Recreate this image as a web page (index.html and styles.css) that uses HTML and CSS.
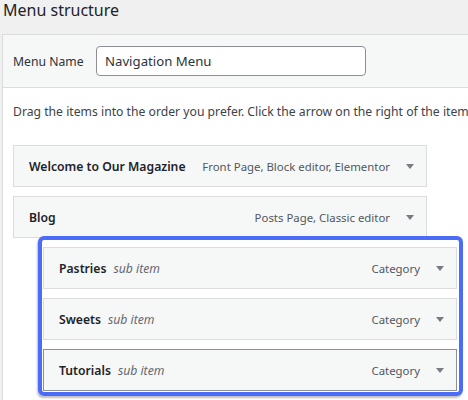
FILE: index.html
```html
<!DOCTYPE html>
<html lang="en">
<head>
<meta charset="utf-8">
<title>Menu structure</title>
<link rel="stylesheet" href="styles.css">
</head>
<body>
<h2 class="title">Menu structure</h2>
<div class="panel">
  <div class="panel-header">
    <label class="name-label" for="menu-name">Menu Name</label>
    <input class="name-input" id="menu-name" type="text" value="Navigation Menu">
  </div>
  <div class="panel-body">
    <p class="hint">Drag the items into the order you prefer. Click the arrow on the right of the item to reveal additional configuration options.</p>
    <ul class="menu">
      <li class="item">
        <div class="handle">
          <span class="item-title">Welcome to Our Magazine</span>
          <span class="controls"><span class="item-type">Front Page, Block editor, Elementor</span><span class="arrow"></span></span>
        </div>
      </li>
      <li class="item">
        <div class="handle">
          <span class="item-title">Blog</span>
          <span class="controls"><span class="item-type">Posts Page, Classic editor</span><span class="arrow"></span></span>
        </div>
      </li>
      <li class="subgroup">
        <ul class="submenu">
          <li class="item">
            <div class="handle">
              <span class="item-title">Pastries</span><span class="sub-label">sub item</span>
              <span class="controls"><span class="item-type">Category</span><span class="arrow"></span></span>
            </div>
          </li>
          <li class="item">
            <div class="handle">
              <span class="item-title">Sweets</span><span class="sub-label">sub item</span>
              <span class="controls"><span class="item-type">Category</span><span class="arrow"></span></span>
            </div>
          </li>
          <li class="item">
            <div class="handle handle-active">
              <span class="item-title">Tutorials</span><span class="sub-label">sub item</span>
              <span class="controls"><span class="item-type">Category</span><span class="arrow"></span></span>
            </div>
          </li>
        </ul>
        <div class="highlight"></div>
      </li>
    </ul>
  </div>
</div>
</body>
</html>
```
FILE: styles.css
```css
html, body {
  margin: 0;
  padding: 0;
  overflow: hidden;
}
body {
  background: #f0f0f1;
  font-family: "Noto Sans", "Open Sans", sans-serif;
  font-size: 12.2px;
  color: #3c434a;
  width: 468px;
  height: 400px;
}
.title {
  margin: 0;
  padding: 0 0 0 3px;
  height: 34px;
  font-size: 16px;
  line-height: 21px;
  font-weight: 400;
  color: #1d2327;
}
.panel {
  margin-left: 2px;
  width: 620px;
  height: 366px;
  border: 1px solid #dcdcde;
  border-bottom: 0;
  background: #fff;
}
.panel-header {
  display: flex;
  align-items: center;
  padding: 11px 10px;
  background: #f6f7f7;
  border-bottom: 1px solid #dcdcde;
}
.name-label {
  width: 83px;
  flex: none;
  color: #2c3338;
}
.name-input {
  box-sizing: border-box;
  width: 270px;
  height: 30px;
  margin: 0;
  padding: 0 8px;
  border: 1px solid #8c8f94;
  border-radius: 4px;
  background: #fff;
  font-family: inherit;
  font-size: 13.2px;
  color: #2c3338;
}
.panel-body {
  padding: 0 10px;
}
.hint {
  margin: 14px 0 23px;
  line-height: 20px;
  white-space: nowrap;
  color: #3c434a;
}
.menu, .submenu {
  list-style: none;
  margin: 0;
  padding: 0;
}
.item {
  width: 414px;
  margin-bottom: 9px;
}
.handle {
  box-sizing: border-box;
  display: flex;
  align-items: center;
  height: 42px;
  padding: 0 12px 0 15px;
  border: 1px solid #dcdcde;
  background: #f6f7f7;
  white-space: nowrap;
}
.handle-active {
  border-color: #8c8f94;
}
.item-title {
  font-weight: 600;
  color: #1d2327;
}
.sub-label {
  margin-left: 7px;
  font-style: italic;
  color: #646970;
}
.controls {
  margin-left: auto;
  display: flex;
  align-items: center;
  gap: 16px;
}
.item-type {
  font-size: 11.4px;
  color: #50575e;
}
.arrow {
  width: 0;
  height: 0;
  border-left: 4px solid transparent;
  border-right: 4px solid transparent;
  border-top: 5px solid #787c82;
}
.subgroup {
  position: relative;
  width: 414px;
  margin-left: 30px;
}
.submenu .item:last-child {
  margin-bottom: 0;
}
.highlight {
  position: absolute;
  top: -11px;
  left: -5px;
  right: -6px;
  bottom: -5px;
  border: 4px solid #4a6cf7;
  border-radius: 6px;
  box-shadow: -1px 2px 2px rgba(0, 0, 0, 0.25);
  pointer-events: none;
}
```
